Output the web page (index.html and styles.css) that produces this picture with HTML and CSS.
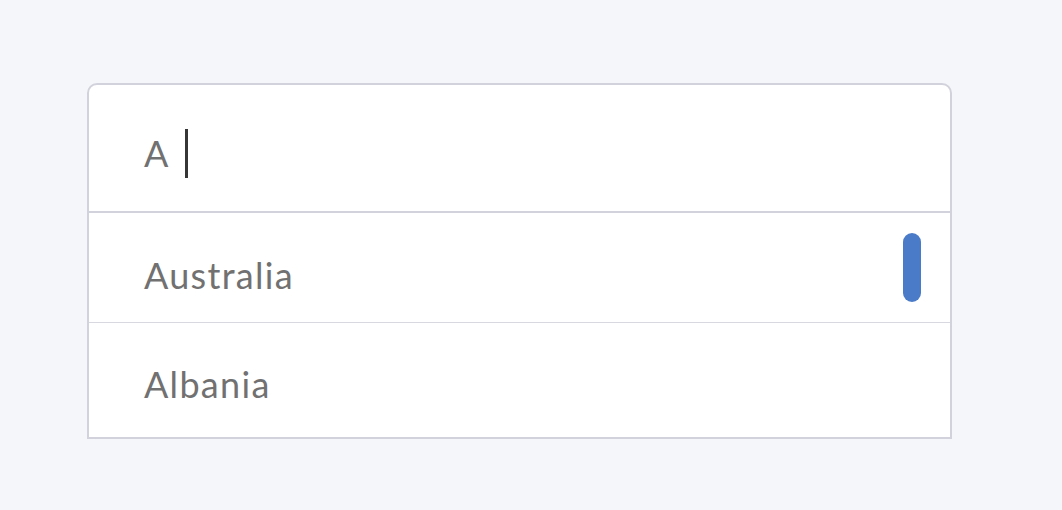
FILE: index.html
```html
<!DOCTYPE html>
<html lang="en">
<head>
<meta charset="utf-8">
<title>Country search</title>
<link rel="stylesheet" href="styles.css">
</head>
<body>
<div class="combo">
  <div class="input-row">
    <span class="query">A</span><span class="caret"></span>
  </div>
  <ul class="options">
    <li class="option first">Australia<span class="thumb"></span></li>
    <li class="option">Albania</li>
  </ul>
</div>
</body>
</html>
```
FILE: styles.css
```css
html, body {
  margin: 0;
  padding: 0;
  background: #f5f6fa;
}
body {
  width: 1062px;
  height: 510px;
  padding: 83px 0 0 87px;
  box-sizing: border-box;
  font-family: Lato, "Open Sans", sans-serif;
}
.combo {
  width: 865px;
  box-sizing: border-box;
  background: #ffffff;
  border: 2px solid #d2d2dc;
  border-radius: 10px 10px 0 0;
}
.input-row {
  height: 128px;
  box-sizing: border-box;
  padding: 10px 0 0 55px;
  display: flex;
  align-items: center;
  border-bottom: 2px solid #d2d2dc;
}
.query {
  font-size: 36px;
  line-height: 43px;
  color: #717171;
  letter-spacing: 1.2px;
}
.caret {
  width: 3px;
  height: 49px;
  background: #363636;
  margin-left: 15px;
}
.options {
  list-style: none;
  margin: 0;
  padding: 0;
}
.option {
  position: relative;
  font-size: 36px;
  line-height: 43px;
  letter-spacing: 1.3px;
  color: #717171;
  padding: 40px 0 0 55px;
  box-sizing: border-box;
  height: 114px;
}
.option.first {
  height: 110px;
  padding-top: 41px;
  border-bottom: 1px solid #d8d8e0;
}
.thumb {
  position: absolute;
  top: 20px;
  right: 29px;
  width: 18px;
  height: 69px;
  border-radius: 9px;
  background: #4a7bc8;
}
```
